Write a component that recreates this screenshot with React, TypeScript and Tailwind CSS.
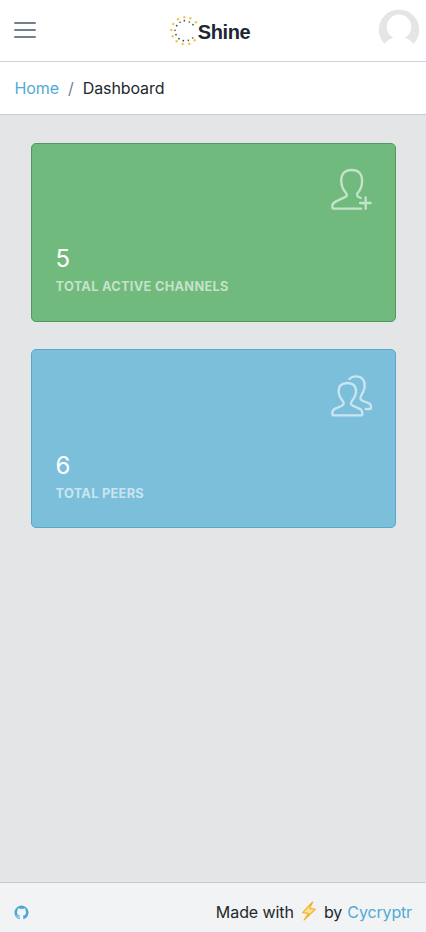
import type { ReactNode } from 'react'

interface StatCardProps {
  readonly value: number
  readonly label: string
  readonly className: string
  readonly icon: ReactNode
}

const OUTER_DOTS = [
  [108, 49], [91, 37], [73, 34], [54, 40], [40, 54], [34, 72],
  [38, 91], [50, 106], [68, 114], [88, 113], [104, 103],
]

const INNER_DOTS = [
  [99, 56], [88, 48], [73, 44], [60, 49], [50, 59], [45, 73],
  [48, 86], [57, 98], [70, 104], [85, 103], [98, 96],
]

function LogoMark() {
  return (
    <svg viewBox="30 27 84 93" className="h-[31px] w-7" aria-hidden="true">
      {OUTER_DOTS.map(([cx, cy]) => (
        <circle key={`${cx}-${cy}`} cx={cx} cy={cy} r="3.7" fill="#f7c544" />
      ))}
      {INNER_DOTS.map(([cx, cy]) => (
        <circle key={`${cx}-${cy}`} cx={cx} cy={cy} r="2.5" fill="#34495e" />
      ))}
    </svg>
  )
}

function Avatar() {
  return (
    <svg viewBox="0 0 42 42" className="size-[42px]" aria-hidden="true">
      <circle cx="21" cy="21.7" r="20.2" fill="#e5e5e5" />
      <circle cx="21" cy="18.9" r="12.3" fill="#fff" />
      <ellipse cx="21" cy="44" rx="17.5" ry="15" fill="#fff" />
    </svg>
  )
}

function UserFollowIcon() {
  return (
    <svg
      viewBox="33 99 126 126"
      className="size-[42px]"
      fill="none"
      stroke="currentColor"
      strokeWidth="7"
      strokeLinecap="round"
      strokeLinejoin="round"
      aria-hidden="true"
    >
      <path d="M123 221H42q-5 0-5-5v-3c0-8 3-10 11-14l24-11c9-4 11-8 6-14C69 164 64 154 64 139c-1-23 11-34 31-34s32 11 31 34c0 15-5 27-13 35-5 6-2 10 9 15" />
      <path d="M137 187v34M120 204h32" />
    </svg>
  )
}

function PeopleIcon() {
  return (
    <svg
      viewBox="33 103 126 126"
      className="size-[42px]"
      fill="none"
      stroke="currentColor"
      strokeWidth="7"
      strokeLinecap="round"
      strokeLinejoin="round"
      aria-hidden="true"
    >
      <path d="M42 224q-5 0-5-5v-2c0-8 2-10 9-13l18-8c8-4 9-8 5-14-8-11-13-17-13-29-1-17 9-26 26-26s27 9 26 26c0 12-5 18-13 29-4 6-3 10 5 14l18 8c7 3 9 5 9 13v2q0 5-5 5z" />
      <path d="M88 115c5-5 12-8 20-8 18 0 27 12 26 29 0 12-4 18-10 28-5 8-3 14 5 17l16 6c7 3 8 6 8 12v2q0 4-5 4h-11" />
    </svg>
  )
}

function StatCard({ value, label, className, icon }: StatCardProps) {
  return (
    <section className={`flex h-[179px] flex-col rounded-[5px] border pr-[22px] pl-[23.5px] ${className}`}>
      <div className="flex justify-end text-white/60">{icon}</div>
      <div className="mt-[33px] text-2xl leading-8">{value}</div>
      <div className="mt-[2px] text-[12.8px] leading-5 font-[650] tracking-[0.28px] text-white/60 uppercase">
        {label}
      </div>
    </section>
  )
}

export default function App() {
  return (
    <div className="flex h-screen flex-col bg-[#e4e5e6] font-['Inter',sans-serif] text-base text-[#23282c]">
      <header className="grid h-[62px] shrink-0 grid-cols-3 items-center border-b border-[#cfd2d4] bg-white pb-px">
        <button type="button" aria-label="Toggle menu" className="ml-[14px] flex w-[22px] flex-col gap-[5px]">
          <span className="h-0.5 w-full rounded-full bg-[#73818f]" />
          <span className="h-0.5 w-full rounded-full bg-[#73818f]" />
          <span className="h-0.5 w-full rounded-full bg-[#73818f]" />
        </button>
        <div className="flex items-center justify-center pr-[6px]">
          <LogoMark />
          <span className="pt-[3px] font-['Liberation_Sans',sans-serif] text-[20px] leading-6 font-bold tracking-[-0.4px] text-[#1c2733]">
            Shine
          </span>
        </div>
        <div className="flex justify-end pr-[6px] pb-[2px]">
          <Avatar />
        </div>
      </header>

      <nav aria-label="Breadcrumb" className="flex h-[53px] shrink-0 items-center border-b border-[#c8ced3] bg-white px-[14px] pl-[14.5px]">
        <a href="#home" className="tracking-[-0.1px] text-[#53a9d6]">Home</a>
        <span className="px-[9px] text-[#73818f]">/</span>
        <span className="tracking-[-0.1px]">Dashboard</span>
      </nav>

      <main className="flex flex-1 flex-col gap-[27px] pt-7 pr-[30px] pl-[31px] text-white">
        <StatCard
          value={5}
          label="Total Active Channels"
          className="border-[#4f9a60] bg-[#6fba7c] pt-6"
          icon={<UserFollowIcon />}
        />
        <StatCard
          value={6}
          label="Total Peers"
          className="border-[#55a9cd] bg-[#7bbfdb] pt-[25px]"
          icon={<PeopleIcon />}
        />
      </main>

      <footer className="flex h-[50px] shrink-0 items-center justify-between border-t border-[#c8cacc] bg-[#f1f3f4] px-[14px] pt-[9px]">
        <a href="#github" aria-label="GitHub" className="text-[#4fa7d6]">
          <svg viewBox="0 0 16 16" className="size-[15px]" fill="currentColor" aria-hidden="true">
            <path d="M8 .5a7.5 7.5 0 0 0-2.37 14.62c.37.07.51-.16.51-.36v-1.4c-2.09.46-2.53-.89-2.53-.89-.34-.87-.83-1.1-.83-1.1-.68-.46.05-.45.05-.45.75.05 1.15.77 1.15.77.67 1.15 1.75.82 2.18.62.07-.48.26-.82.48-1-1.67-.19-3.42-.83-3.42-3.71 0-.82.3-1.49.77-2.01-.08-.19-.33-.96.08-1.99 0 0 .63-.2 2.06.77a7.1 7.1 0 0 1 3.75 0c1.43-.97 2.06-.77 2.06-.77.41 1.03.16 1.8.08 1.99.48.52.77 1.19.77 2.01 0 2.89-1.76 3.52-3.43 3.71.27.23.51.69.51 1.39v2.06c0 .2.14.43.52.36A7.5 7.5 0 0 0 8 .5Z" />
          </svg>
        </a>
        <p className="flex items-center">
          <span className="tracking-[-0.08px]">Made with</span>
          <svg viewBox="0 0 48 60" className="mr-[6px] ml-[7px] h-5 w-4 -translate-y-px" aria-label="lightning">
            <path d="M35 3 5 35l18 2L9 57l34-32-17-3Z" fill="#fde68a" stroke="#f5ae2e" strokeWidth="3.5" strokeLinejoin="round" />
          </svg>
          <span className="mr-[5px] ml-px">by</span>
          <a href="#cycryptr" className="tracking-[-0.15px] text-[#53a9d6]">Cycryptr</a>
        </p>
      </footer>
    </div>
  )
}
